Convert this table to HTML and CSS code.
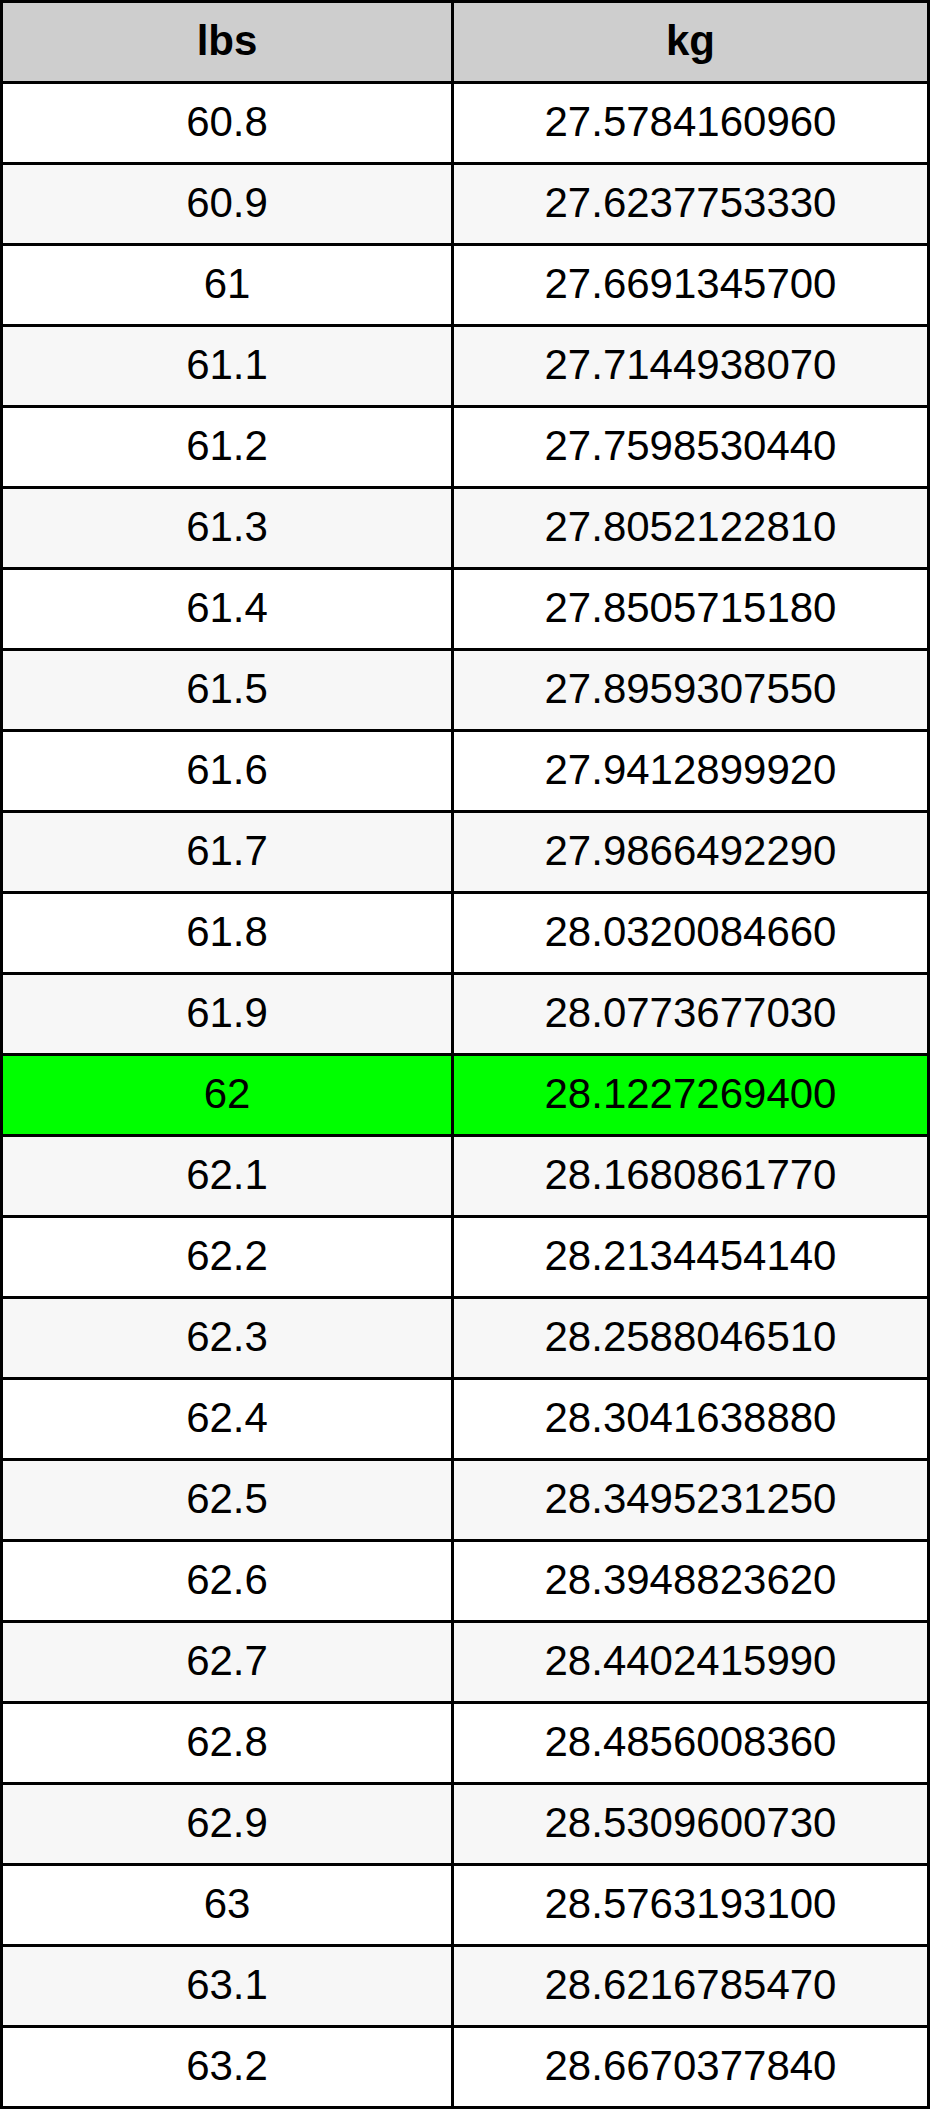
FILE: index.html
```html
<!DOCTYPE html>
<html>
<head>
<meta charset="utf-8">
<link rel="stylesheet" href="styles.css">
</head>
<body>
<div class="table">
  <div class="cell head">lbs</div><div class="cell head">kg</div>
  <div class="cell">60.8</div><div class="cell">27.5784160960</div>
  <div class="cell alt">60.9</div><div class="cell alt">27.6237753330</div>
  <div class="cell">61</div><div class="cell">27.6691345700</div>
  <div class="cell alt">61.1</div><div class="cell alt">27.7144938070</div>
  <div class="cell">61.2</div><div class="cell">27.7598530440</div>
  <div class="cell alt">61.3</div><div class="cell alt">27.8052122810</div>
  <div class="cell">61.4</div><div class="cell">27.8505715180</div>
  <div class="cell alt">61.5</div><div class="cell alt">27.8959307550</div>
  <div class="cell">61.6</div><div class="cell">27.9412899920</div>
  <div class="cell alt">61.7</div><div class="cell alt">27.9866492290</div>
  <div class="cell">61.8</div><div class="cell">28.0320084660</div>
  <div class="cell alt">61.9</div><div class="cell alt">28.0773677030</div>
  <div class="cell hl">62</div><div class="cell hl">28.1227269400</div>
  <div class="cell alt">62.1</div><div class="cell alt">28.1680861770</div>
  <div class="cell">62.2</div><div class="cell">28.2134454140</div>
  <div class="cell alt">62.3</div><div class="cell alt">28.2588046510</div>
  <div class="cell">62.4</div><div class="cell">28.3041638880</div>
  <div class="cell alt">62.5</div><div class="cell alt">28.3495231250</div>
  <div class="cell">62.6</div><div class="cell">28.3948823620</div>
  <div class="cell alt">62.7</div><div class="cell alt">28.4402415990</div>
  <div class="cell">62.8</div><div class="cell">28.4856008360</div>
  <div class="cell alt">62.9</div><div class="cell alt">28.5309600730</div>
  <div class="cell">63</div><div class="cell">28.5763193100</div>
  <div class="cell alt">63.1</div><div class="cell alt">28.6216785470</div>
  <div class="cell">63.2</div><div class="cell">28.6670377840</div>
</div>
</body>
</html>
```
FILE: styles.css
```css
html, body {
  margin: 0;
  padding: 0;
  background: #ffffff;
}
.table {
  display: grid;
  grid-template-columns: 448px 473px;
  grid-auto-rows: 78px;
  gap: 3px;
  padding: 3px;
  width: 930px;
  box-sizing: border-box;
  background: #000000;
  font-family: "Liberation Sans", Arial, sans-serif;
  font-size: 42px;
  color: #000000;
}
.cell {
  display: flex;
  align-items: center;
  justify-content: center;
  background: #ffffff;
  padding-bottom: 2px;
  box-sizing: border-box;
}
.cell.alt {
  background: #f7f7f7;
}
.cell.head {
  background: #cecece;
  font-weight: bold;
}
.cell.hl {
  background: #00ff00;
}
```
